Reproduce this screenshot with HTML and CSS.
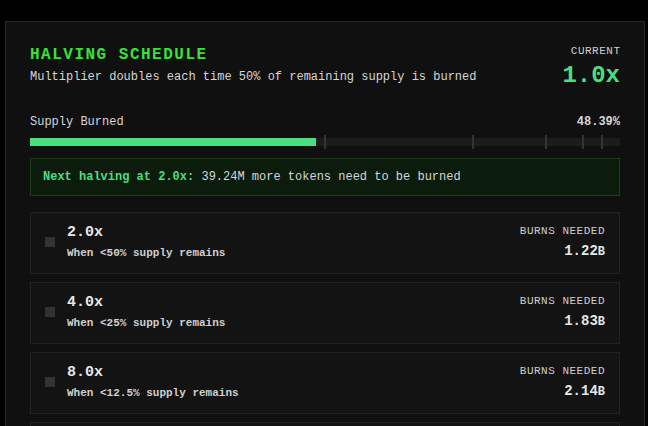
FILE: index.html
```html
<!DOCTYPE html>
<html lang="en">
<head>
    <meta charset="UTF-8">
    <meta name="viewport" content="width=device-width, initial-scale=1.0">
    <title>Halving Schedule</title>
    <link rel="stylesheet" href="styles.css">
</head>
<body>
    <div class="panel">
        <div class="header">
            <div class="header-left">
                <h1>HALVING SCHEDULE</h1>
                <p>Multiplier doubles each time 50% of remaining supply is burned</p>
            </div>
            <div class="current">
                <div class="label">CURRENT</div>
                <div class="current-value">1.0x</div>
            </div>
        </div>

        <div class="burned-row">
            <span>Supply Burned</span>
            <span class="pct">48.39%</span>
        </div>
        <div class="bar">
            <div class="bar-fill" style="width: 48.39%"></div>
            <span class="tick" style="left: 50%"></span>
            <span class="tick" style="left: 75%"></span>
            <span class="tick" style="left: 87.5%"></span>
            <span class="tick" style="left: 93.75%"></span>
            <span class="tick" style="left: 96.875%"></span>
        </div>

        <div class="next">
            <strong>Next halving at 2.0x:</strong> 39.24M more tokens need to be burned
        </div>

        <div class="tiers">
            <div class="tier">
                <span class="dot"></span>
                <div class="tier-info">
                    <div class="tier-mult">2.0x</div>
                    <div class="tier-desc">When &lt;50% supply remains</div>
                </div>
                <div class="tier-burns">
                    <div class="label">BURNS NEEDED</div>
                    <div class="tier-value">1.22<small>B</small></div>
                </div>
            </div>
            <div class="tier">
                <span class="dot"></span>
                <div class="tier-info">
                    <div class="tier-mult">4.0x</div>
                    <div class="tier-desc">When &lt;25% supply remains</div>
                </div>
                <div class="tier-burns">
                    <div class="label">BURNS NEEDED</div>
                    <div class="tier-value">1.83<small>B</small></div>
                </div>
            </div>
            <div class="tier">
                <span class="dot"></span>
                <div class="tier-info">
                    <div class="tier-mult">8.0x</div>
                    <div class="tier-desc">When &lt;12.5% supply remains</div>
                </div>
                <div class="tier-burns">
                    <div class="label">BURNS NEEDED</div>
                    <div class="tier-value">2.14<small>B</small></div>
                </div>
            </div>
            <div class="tier tier-next"></div>
        </div>
    </div>
</body>
</html>
```

FILE: styles.css
```css
body {
    margin: 0;
    background: #000;
    font-family: "Courier New", Courier, "Nimbus Mono PS", "Nimbus Mono L", FreeMono, "Liberation Mono", monospace;
    color: #d6d6d6;
    overflow: hidden;
}

.panel {
    width: 590px;
    margin: 21px 0 0 5px;
    padding: 23px 24px 24px;
    background: #101010;
    border: 1px solid #2a2a2a;
}

.header {
    display: flex;
    justify-content: space-between;
    align-items: flex-start;
    margin-bottom: 24px;
}

.header h1 {
    margin: 0 0 4px;
    font-size: 16px;
    line-height: 20px;
    letter-spacing: 1.5px;
    color: #3be03b;
}

.header p {
    margin: 0;
    font-size: 12px;
    line-height: 16px;
    color: #d6d6d6;
}

.current {
    text-align: right;
    margin-top: -1px;
}

.label {
    font-size: 11px;
    line-height: 14px;
    letter-spacing: 0.5px;
    color: #cfcfcf;
}

.current .label {
    margin-right: -0.5px;
}

.current-value {
    margin-top: 4px;
    font-size: 24px;
    line-height: 28px;
    font-weight: bold;
    color: #4ade80;
}

.burned-row {
    display: flex;
    justify-content: space-between;
    font-size: 12px;
    line-height: 16px;
}

.burned-row .pct {
    font-weight: bold;
}

.bar {
    position: relative;
    height: 8px;
    margin-top: 8px;
    background: #1c1c1c;
}

.bar-fill {
    height: 100%;
    background: #4ade80;
}

.tick {
    position: absolute;
    top: -3px;
    width: 2px;
    height: 14px;
    margin-left: -1px;
    background: #333;
}

.next {
    margin-top: 12px;
    padding: 10px 12px;
    font-size: 12px;
    line-height: 16px;
    background: #0c1c0c;
    border: 1px solid #1d3d1d;
    color: #d6d6d6;
}

.next strong {
    color: #4ade80;
}

.tiers {
    margin-top: 16px;
}

.tier {
    display: flex;
    align-items: center;
    gap: 12px;
    height: 36px;
    padding: 11px 14px 13px;
    margin-bottom: 8px;
    background: #131313;
    border: 1px solid #222;
}

.dot {
    width: 10px;
    height: 10px;
    background: #333;
    flex-shrink: 0;
}

.tier-info {
    flex: 1;
}

.tier-mult {
    font-size: 15px;
    line-height: 18px;
    font-weight: bold;
    color: #e6e6e6;
}

.tier-desc {
    margin-top: 4px;
    font-size: 11px;
    line-height: 14px;
    font-weight: bold;
    color: #cfcfcf;
}

.tier-burns {
    text-align: right;
}

.tier-value {
    margin-top: 4px;
    font-size: 14px;
    line-height: 18px;
    font-weight: bold;
    color: #e6e6e6;
}

.tier-value small {
    font-size: 12px;
}
```
